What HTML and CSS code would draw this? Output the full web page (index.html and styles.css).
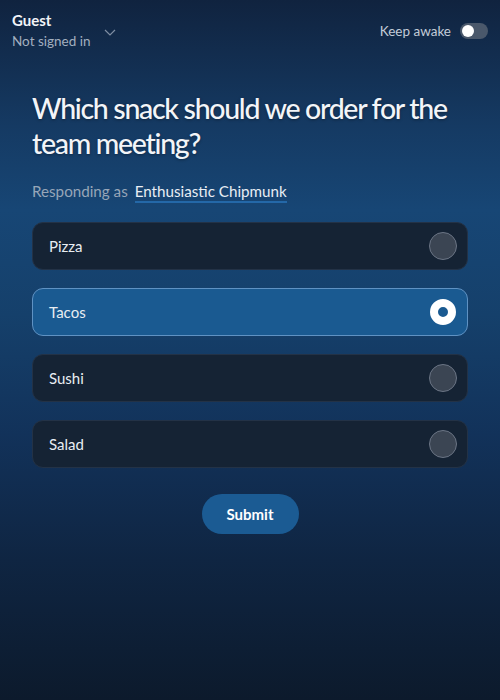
FILE: index.html
```html
<!DOCTYPE html>
<html lang="en">
<head>
    <meta charset="UTF-8">
    <meta name="viewport" content="width=device-width, initial-scale=1.0">
    <title>Poll</title>
    <link rel="stylesheet" href="styles.css">
</head>
<body>

<div class="topbar">
    <div class="account">
        <div class="account-text">
            <div class="account-name">Guest</div>
            <div class="account-status">Not signed in</div>
        </div>
        <svg class="chevron" width="12" height="7" viewBox="0 0 12 7">
            <path d="M1 1 L6 6 L11 1" fill="none" stroke="#7f8ea3" stroke-width="1.2"/>
        </svg>
    </div>
    <label class="awake">
        <span>Keep awake</span>
        <span class="toggle"><span class="knob"></span></span>
    </label>
</div>

<div class="poll">
    <h1>Which snack should we order for the team meeting?</h1>
    <p class="responder">Responding as <span class="alias">Enthusiastic Chipmunk</span></p>

    <!-- Choices -->
    <ul class="choices">
        <li class="choice"><span>Pizza</span><span class="radio"></span></li>
        <li class="choice selected"><span>Tacos</span><span class="radio"></span></li>
        <li class="choice"><span>Sushi</span><span class="radio"></span></li>
        <li class="choice"><span>Salad</span><span class="radio"></span></li>
    </ul>

    <div class="actions">
        <button class="submit">Submit</button>
    </div>
</div>

</body>
</html>
```

FILE: styles.css
```css
/* Page background */
body {
    font-family: 'Lato', 'Noto Sans', sans-serif;
    margin: 0;
    min-height: 700px;
    color: #f1f4f8;
    background: linear-gradient(180deg, #10233f 0%, #153a63 18%, #174675 30%, #15406b 45%, #12325a 62%, #0f2542 80%, #0c1a2c 100%);
}

/* Top bar */
.topbar {
    display: flex;
    justify-content: space-between;
    align-items: center;
    padding: 10px 12px 0 12px;
}

.account {
    display: flex;
    align-items: center;
    gap: 14px;
}

.account-name {
    font-size: 15px;
    font-weight: 700;
    line-height: 20px;
}

.account-status {
    font-size: 13.5px;
    line-height: 22px;
    color: #a3afbf;
}

.chevron {
    margin-top: 2px;
}

.awake {
    display: flex;
    align-items: center;
    gap: 9px;
    font-size: 13.5px;
    color: #c3ccd8;
    margin-top: -1px;
}

.toggle {
    display: flex;
    align-items: center;
    width: 28px;
    height: 16px;
    border-radius: 8px;
    background: #4a586b;
    padding: 0 2px;
    box-sizing: border-box;
}

.knob {
    width: 12px;
    height: 12px;
    border-radius: 50%;
    background: #fff;
}

/* Question */
.poll {
    padding: 39px 32px 0 32px;
}

h1 {
    margin: 0;
    font-size: 28.5px;
    font-weight: 500;
    line-height: 35px;
    letter-spacing: -1.3px;
    color: #f3f5f8;
    text-shadow: 0 1px 3px rgba(0, 0, 0, 0.35);
}

.responder {
    margin: 21px 0 0 0;
    font-size: 15.2px;
    color: #97a6b8;
}

.alias {
    margin-left: 3px;
    color: #e9eef4;
    border-bottom: 2px solid #2468a8;
    padding-bottom: 1px;
}

/* Choices */
.choices {
    list-style: none;
    margin: 22px 0 0 0;
    padding: 0;
    display: flex;
    flex-direction: column;
    gap: 18px;
}

.choice {
    display: flex;
    justify-content: space-between;
    align-items: center;
    height: 48px;
    box-sizing: border-box;
    padding: 0 10px 0 16px;
    border: 1px solid #233246;
    border-radius: 11px;
    background: #152334;
    font-size: 15px;
    color: #e8edf2;
}

.radio {
    width: 28px;
    height: 28px;
    box-sizing: border-box;
    border-radius: 50%;
    background: #3b4553;
    border: 1px solid #6b7585;
}

.choice.selected {
    background: #1a5a91;
    border-color: #5f92c3;
}

.choice.selected .radio {
    width: 26px;
    height: 26px;
    margin-right: 1px;
    border: 8px solid #fff;
    background: #1a5a91;
}

/* Submit */
.actions {
    display: flex;
    justify-content: center;
    margin-top: 26px;
}

.submit {
    width: 97px;
    height: 40px;
    border: none;
    border-radius: 20px;
    background: #1b5b93;
    color: #fff;
    font-family: inherit;
    font-size: 15px;
    font-weight: 700;
    cursor: pointer;
}
```
